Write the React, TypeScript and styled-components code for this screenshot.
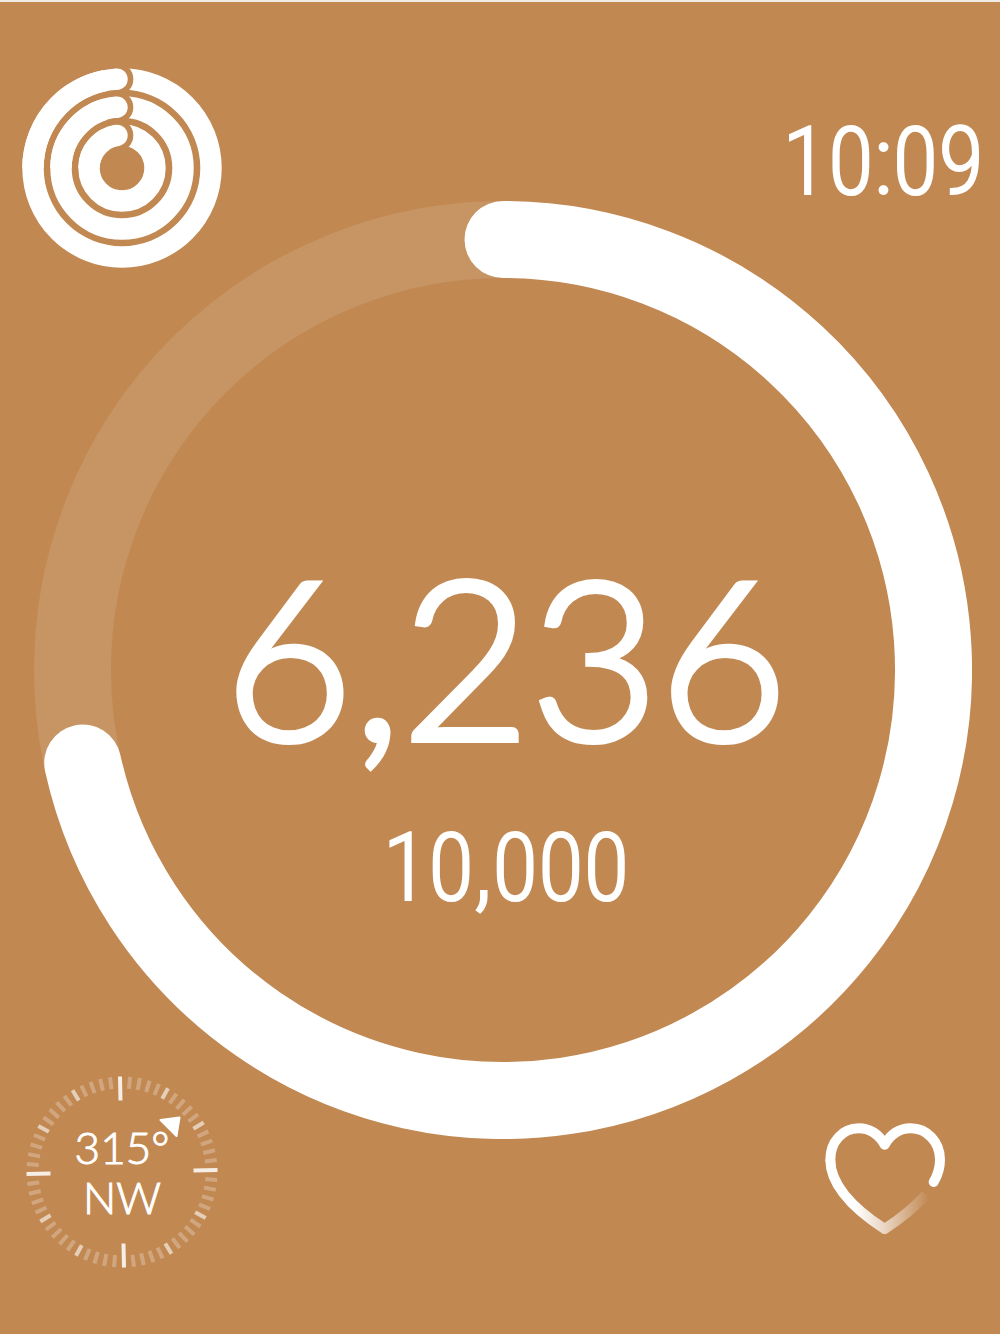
import React from 'react';
import styled, { createGlobalStyle } from 'styled-components';

const BRONZE = '#c18852';

const Global = createGlobalStyle`
  body {
    margin: 0;
    background: ${BRONZE};
  }
`;

const Face = styled.main`
  box-sizing: border-box;
  display: grid;
  min-height: 100vh;
  border-top: 2px solid #f0ebe6;
  background: ${BRONZE};
  color: #fff;
  font-family: 'Roboto Condensed', 'Liberation Sans', sans-serif;
  font-weight: 300;
`;

const Dial = styled.section`
  grid-area: 1 / 1;
  align-self: center;
  display: grid;
  padding: 4px 28px 0 34px;
`;

const DialRing = styled.svg`
  grid-area: 1 / 1;
  display: block;
  width: 100%;
  height: auto;
`;

const Readout = styled.div`
  grid-area: 1 / 1;
  display: flex;
  flex-direction: column;
  align-items: center;
  justify-content: center;
  gap: 44px;
  padding: 112px 0 0 6px;
`;

const Steps = styled.strong`
  font-family: Lato, 'Liberation Sans', sans-serif;
  font-weight: 300;
  font-size: 222px;
  line-height: 240px;
  -webkit-text-stroke: 6px #fff;
`;

const Figure = styled.span`
  font-size: 94px;
  line-height: 100px;
  -webkit-text-stroke: 2px #fff;
`;

const Corners = styled.div`
  grid-area: 1 / 1;
  display: flex;
  flex-direction: column;
  justify-content: space-between;
  padding: 66px 0;
`;

const CornerRow = styled.div<{ $left: number; $right: number }>`
  display: flex;
  align-items: center;
  justify-content: space-between;
  padding: 0 ${(p) => p.$right}px 0 ${(p) => p.$left}px;
`;

const Clock = styled(Figure).attrs({ as: 'time' })`
  padding-bottom: 12px;
`;

const Drawing = styled.svg`
  display: block;
  flex: none;
  overflow: visible;
`;

const Compass = styled.div`
  display: grid;
  place-items: center;
`;

const CompassDial = styled(Drawing)`
  grid-area: 1 / 1;
`;

const Heading = styled.div`
  grid-area: 1 / 1;
  display: flex;
  flex-direction: column;
  align-items: center;
  font-family: Lato, 'Liberation Sans', sans-serif;
  font-size: 44px;
  line-height: 50px;
  -webkit-text-stroke: 1px #fff;
`;

const HeartRate = styled.div`
  padding-top: 14px;
`;

function ActivityRings() {
  return (
    <Drawing width="200" height="200" viewBox="-100 -100 200 200" role="img" aria-label="Activity">
      {[89, 61, 33].map((r) => {
        const capX = -5;
        const capY = -Math.sqrt(r * r - capX * capX);
        return (
          <g key={r} fill="none" stroke="#fff" strokeWidth="21.4">
            <circle r={r} />
            <circle cx={capX} cy={capY} r="16.3" fill={BRONZE} stroke="none" />
            <path d={`M${-r} 0A${r} ${r} 0 0 1 ${capX} ${capY}`} />
            <circle cx={capX} cy={capY} r="10.7" fill="#fff" stroke="none" />
          </g>
        );
      })}
    </Drawing>
  );
}

function tickStyle(i: number) {
  if (i % 15 === 0) return { length: 24, opacity: 0.85 };
  if (i % 5 === 0) return { length: 12, opacity: 0.6 };
  return { length: 12, opacity: 0.26 };
}

function CompassTicks() {
  return (
    <CompassDial width="192" height="192" viewBox="-96 -96 192 192" aria-hidden="true">
      {Array.from({ length: 60 }, (_, i) => {
        const { length, opacity } = tickStyle(i);
        return (
          <line
            key={i}
            y1={-95.5}
            y2={-95.5 + length}
            stroke="#fff"
            strokeWidth="4"
            strokeOpacity={opacity}
            transform={`rotate(${i * 6 - 1.2})`}
          />
        );
      })}
      <path d="M38.500 -52L57.500 -54.500L54.500 -36Z" fill="#fff" stroke="#fff" strokeWidth="2" strokeLinejoin="round" />
    </CompassDial>
  );
}

function Heart() {
  return (
    <Drawing width="120" height="112" viewBox="75 70 360 336" role="img" aria-label="Heart rate">
      <defs>
        <linearGradient id="heart-fade" gradientUnits="userSpaceOnUse" x1="165" y1="0" x2="388" y2="0">
          <stop offset="0" stopColor="#fff" />
          <stop offset="0.4" stopColor="#fff" stopOpacity="0.65" />
          <stop offset="1" stopColor="#fff" stopOpacity="0" />
        </linearGradient>
      </defs>
      <g fill="none" strokeWidth="30" strokeLinejoin="round">
        <path
          d="M401 247C412 228 420 207 420 180C420 126 380 86 332 86C298 86 272 104 254 135C236 104 210 86 176 86C128 86 91 126 91 180"
          stroke="#fff"
          strokeLinecap="round"
        />
        <path d="M91 180C91 250 150 320 254 388C300 358 345 322 378 285" stroke="url(#heart-fade)" />
      </g>
    </Drawing>
  );
}

export default function App() {
  return (
    <>
      <Global />
      <Face>
        <Dial aria-label="Steps today">
          <DialRing viewBox="-469 -469 938 938" fill="none" strokeWidth="77" aria-hidden="true">
            <circle r="430.5" stroke="#fff" strokeOpacity="0.1" />
            <path d="M0 -430.500A430.500 430.500 0 1 1 -420.300 93" stroke="#fff" strokeLinecap="round" />
          </DialRing>
          <Readout>
            <Steps>6,236</Steps>
            <Figure>10,000</Figure>
          </Readout>
        </Dial>
        <Corners>
          <CornerRow $left={22} $right={16}>
            <ActivityRings />
            <Clock>10:09</Clock>
          </CornerRow>
          <CornerRow $left={26} $right={55}>
            <Compass>
              <CompassTicks />
              <Heading>
                <span>315°</span>
                <span>NW</span>
              </Heading>
            </Compass>
            <HeartRate>
              <Heart />
            </HeartRate>
          </CornerRow>
        </Corners>
      </Face>
    </>
  );
}
